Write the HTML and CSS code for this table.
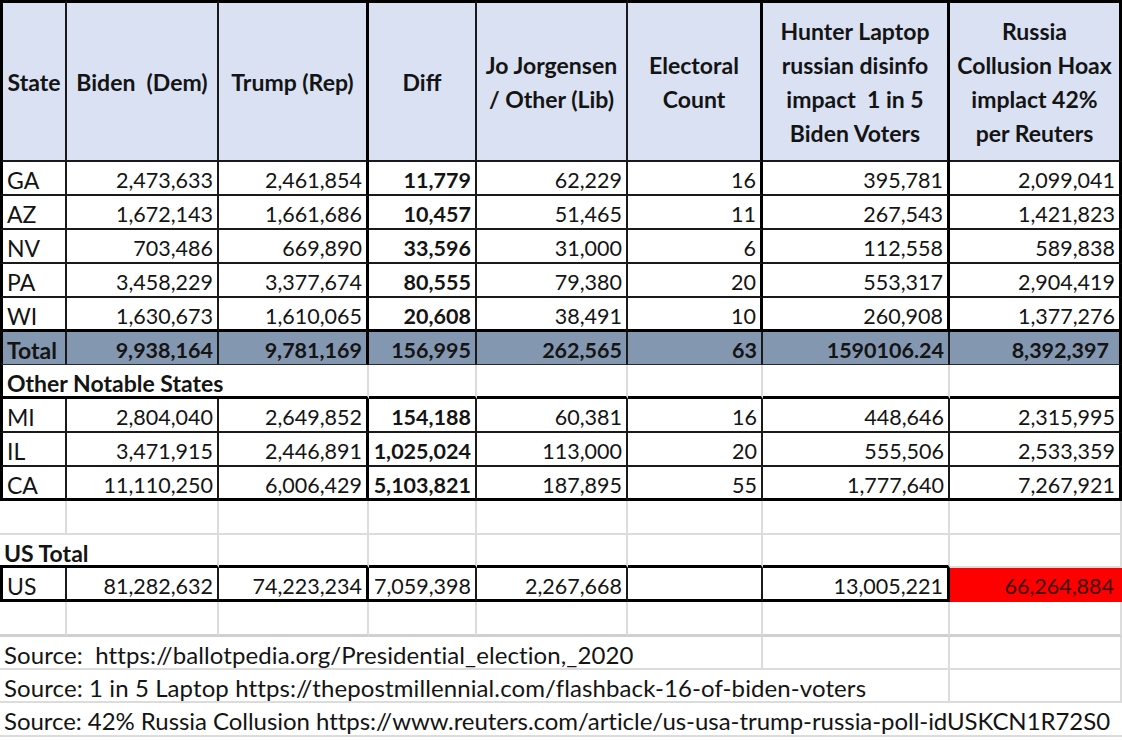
FILE: index.html
```html
<!DOCTYPE html>
<html>
<head>
<meta charset="utf-8">
<link rel="stylesheet" href="styles.css">
</head>
<body>
<div class="sheet">
  <!-- header -->
  <div class="c hd bl3 br2">State</div>
  <div class="c hd br2">Biden  (Dem)</div>
  <div class="c hd br3">Trump (Rep)</div>
  <div class="c hd br2">Diff</div>
  <div class="c hd br2">Jo Jorgensen<br>/ Other (Lib)</div>
  <div class="c hd br3">Electoral<br>Count</div>
  <div class="c hd br3">Hunter Laptop<br>russian disinfo<br>impact  1 in 5<br>Biden Voters</div>
  <div class="c hd br3">Russia<br>Collusion Hoax<br>implact 42%<br>per Reuters</div>

  <!-- GA -->
  <div class="c bl3 br2 bb2">GA</div>
  <div class="c n br2 bb2">2,473,633</div>
  <div class="c n br3 bb2">2,461,854</div>
  <div class="c n b br2 bb2">11,779</div>
  <div class="c n br2 bb2">62,229</div>
  <div class="c n br3 bb2">16</div>
  <div class="c n br3 bb2">395,781</div>
  <div class="c n br3 bb2">2,099,041</div>

  <!-- AZ -->
  <div class="c bl3 br2 bb2">AZ</div>
  <div class="c n br2 bb2">1,672,143</div>
  <div class="c n br3 bb2">1,661,686</div>
  <div class="c n b br2 bb2">10,457</div>
  <div class="c n br2 bb2">51,465</div>
  <div class="c n br3 bb2">11</div>
  <div class="c n br3 bb2">267,543</div>
  <div class="c n br3 bb2">1,421,823</div>

  <!-- NV -->
  <div class="c bl3 br2 bb2">NV</div>
  <div class="c n br2 bb2">703,486</div>
  <div class="c n br3 bb2">669,890</div>
  <div class="c n b br2 bb2">33,596</div>
  <div class="c n br2 bb2">31,000</div>
  <div class="c n br3 bb2">6</div>
  <div class="c n br3 bb2">112,558</div>
  <div class="c n br3 bb2">589,838</div>

  <!-- PA -->
  <div class="c bl3 br2 bb2">PA</div>
  <div class="c n br2 bb2">3,458,229</div>
  <div class="c n br3 bb2">3,377,674</div>
  <div class="c n b br2 bb2">80,555</div>
  <div class="c n br2 bb2">79,380</div>
  <div class="c n br3 bb2">20</div>
  <div class="c n br3 bb2">553,317</div>
  <div class="c n br3 bb2">2,904,419</div>

  <!-- WI -->
  <div class="c bl3 br2 bb3">WI</div>
  <div class="c n br2 bb3">1,630,673</div>
  <div class="c n br3 bb3">1,610,065</div>
  <div class="c n b br2 bb3">20,608</div>
  <div class="c n br2 bb3">38,491</div>
  <div class="c n br3 bb3">10</div>
  <div class="c n br3 bb3">260,908</div>
  <div class="c n br3 bb3">1,377,276</div>

  <!-- Total -->
  <div class="c tot b bl3 br2 bb1">Total</div>
  <div class="c tot n b br2 bb1">9,938,164</div>
  <div class="c tot n b br3 bb1">9,781,169</div>
  <div class="c tot n b br2 bb1">156,995</div>
  <div class="c tot n b br2 bb1">262,565</div>
  <div class="c tot n b br2 bb1">63</div>
  <div class="c tot n b br2 bb1">1590106.24</div>
  <div class="c tot n b br3 bb1 acc">8,392,397</div>

  <!-- Other notable states -->
  <div class="c b span3 bl3 brg bb3">Other Notable States</div>
  <div class="c brg bb3"></div>
  <div class="c brg bb3"></div>
  <div class="c brg bb3"></div>
  <div class="c brg bb3"></div>
  <div class="c br3 bb3"></div>

  <!-- MI -->
  <div class="c bl3 br2 bb2">MI</div>
  <div class="c n br2 bb2">2,804,040</div>
  <div class="c n br3 bb2">2,649,852</div>
  <div class="c n b br2 bb2">154,188</div>
  <div class="c n br2 bb2">60,381</div>
  <div class="c n br2 bb2">16</div>
  <div class="c n br2 bb2">448,646</div>
  <div class="c n br3 bb2">2,315,995</div>

  <!-- IL -->
  <div class="c bl3 br2 bb2">IL</div>
  <div class="c n br2 bb2">3,471,915</div>
  <div class="c n br3 bb2">2,446,891</div>
  <div class="c n b br2 bb2">1,025,024</div>
  <div class="c n br2 bb2">113,000</div>
  <div class="c n br2 bb2">20</div>
  <div class="c n br2 bb2">555,506</div>
  <div class="c n br3 bb2">2,533,359</div>

  <!-- CA -->
  <div class="c bl3 br2 bb3">CA</div>
  <div class="c n br2 bb3">11,110,250</div>
  <div class="c n br3 bb3">6,006,429</div>
  <div class="c n b br2 bb3">5,103,821</div>
  <div class="c n br2 bb3">187,895</div>
  <div class="c n br2 bb3">55</div>
  <div class="c n br2 bb3">1,777,640</div>
  <div class="c n br3 bb3">7,267,921</div>

  <!-- blank -->
  <div class="c brg bbg"></div>
  <div class="c brg bbg"></div>
  <div class="c brg bbg"></div>
  <div class="c brg bbg"></div>
  <div class="c brg bbg"></div>
  <div class="c brg bbg"></div>
  <div class="c brg bbg"></div>
  <div class="c brg bbg"></div>

  <!-- US Total label -->
  <div class="c b span2 brg bb3">US Total</div>
  <div class="c brg bb3"></div>
  <div class="c brg bb3"></div>
  <div class="c brg bb3"></div>
  <div class="c brg bb3"></div>
  <div class="c brg bb3"></div>
  <div class="c brg bbg"></div>

  <!-- US -->
  <div class="c bl3 br2 bb3">US</div>
  <div class="c n br2 bb3">81,282,632</div>
  <div class="c n br3 bb3">74,223,234</div>
  <div class="c n br2 bb3">7,059,398</div>
  <div class="c n br2 bb3">2,267,668</div>
  <div class="c n br2 bb3"></div>
  <div class="c n br3 bb3">13,005,221</div>
  <div class="c n red">66,264,884</div>

  <!-- blank -->
  <div class="c brg bbg3"></div>
  <div class="c brg bbg3"></div>
  <div class="c brg bbg3"></div>
  <div class="c brg bbg3"></div>
  <div class="c brg bbg3"></div>
  <div class="c brg bbg3"></div>
  <div class="c brg bbg3"></div>
  <div class="c brg bbg3"></div>

  <!-- sources -->
  <div class="c src span6 brg bbg">Source:  https://ballotpedia.org/Presidential_election,_2020</div>
  <div class="c brg bbg"></div>
  <div class="c brg bbg"></div>

  <div class="c src span7 brg bbg">Source: 1 in 5 Laptop https://thepostmillennial.com/flashback-16-of-biden-voters</div>
  <div class="c brg bbg"></div>

  <div class="c src long span8 bbg">Source: 42% Russia Collusion https://www.reuters.com/article/us-usa-trump-russia-poll-idUSKCN1R72S0</div>
</div>
</body>
</html>
```

FILE: styles.css
```css
html, body {
  margin: 0;
  padding: 0;
  background: #ffffff;
}

body {
  font-family: "Lato", "Liberation Sans", sans-serif;
  font-size: 23px;
  color: #141414;
}

.sheet {
  display: grid;
  width: 1122px;
  grid-template-columns: 67px 152px 150px 108px 151px 135px 187px 172px;
  grid-template-rows: 162px 34px 34px 34px 34px 34px 33px 34px 34px 34px 34px 34px 33px 34px 35px 33px 33px 34px;
}

.c {
  box-sizing: border-box;
  min-width: 0;
  padding: 3px 4px 0 4px;
  line-height: 30px;
  white-space: pre;
  overflow: visible;
}

.n {
  text-align: right;
  font-size: 21.5px;
}

.b { font-weight: 700; }

.src {
  font-size: 24px;
  letter-spacing: 0.1px;
}

.long {
  letter-spacing: -0.05px;
}

.hd {
  display: flex;
  align-items: center;
  justify-content: center;
  text-align: center;
  padding: 0 2px;
  line-height: 34px;
  font-size: 23px;
  font-weight: 700;
  background: #d9e1f2;
  border-top: 3px solid #000;
  border-bottom: 2px solid #1a1a1a;
}

.tot { background: #8497b0; }
.acc { padding-right: 10px; }

.red {
  background: #ff0000;
  color: #3a0c0c;
  padding-right: 8px;
}

.span2 { grid-column: span 2; }
.span3 { grid-column: span 3; }
.span6 { grid-column: span 6; }
.span7 { grid-column: span 7; }
.span8 { grid-column: span 8; }

.bl3 { border-left: 3px solid #000; }
.br2 { border-right: 2px solid #1a1a1a; }
.br3 { border-right: 3px solid #000; }
.brg { border-right: 2px solid #dcdcdc; }
.bb1 { border-bottom: 1px solid #2a2a2a; }
.bb2 { border-bottom: 2px solid #1a1a1a; }
.bb3 { border-bottom: 3px solid #000; }
.bbg { border-bottom: 2px solid #dcdcdc; }
.bbg3 { border-bottom: 3px solid #d0d0d0; }
```
